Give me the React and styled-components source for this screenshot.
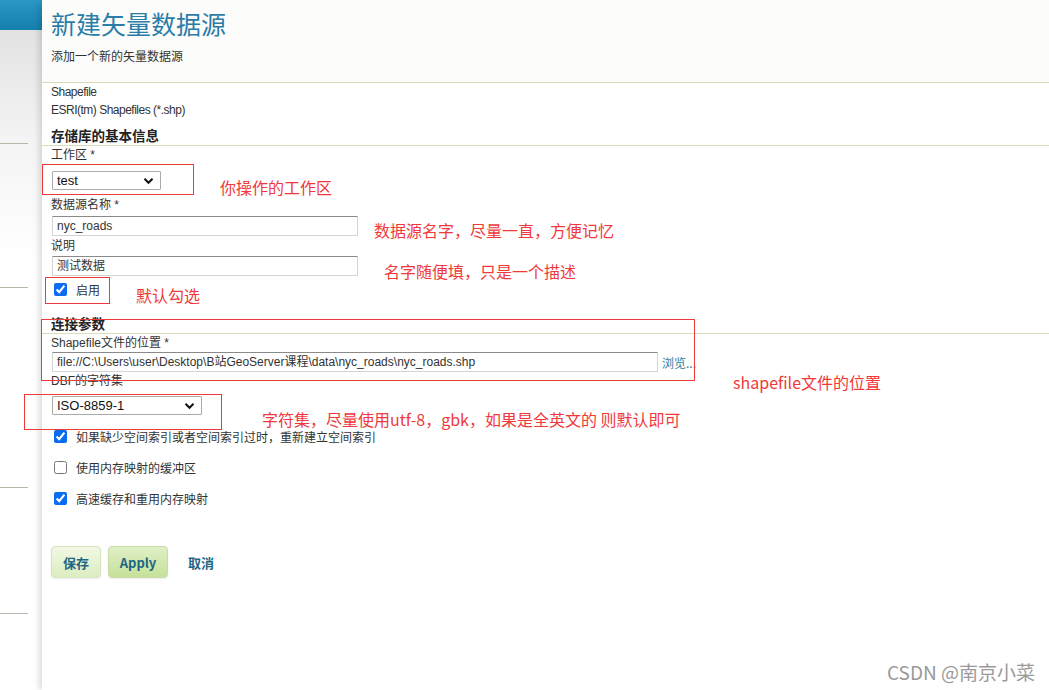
import styled, { createGlobalStyle } from "styled-components";

const Global = createGlobalStyle`
  html, body { margin: 0; padding: 0; background: #fff; }
  body {
    width: 1049px;
    height: 690px;
    overflow: hidden;
    font-family: "Liberation Sans", "Noto Sans CJK SC", sans-serif;
    color: #333;
  }
`;

const Page = styled.div`
  position: relative;
  display: flex;
  width: 1049px;
  height: 690px;
`;

const Sidebar = styled.div`
  width: 42px;
  flex-shrink: 0;
  background: linear-gradient(#e2e2e2 30px, #f4f4f4 140px, #fff 260px);
  display: flex;
  flex-direction: column;
`;

const SideTop = styled.div`
  height: 30px;
  background: linear-gradient(#2a97c6, #1580ae);
`;

const SideRule = styled.div`
  width: 28px;
  height: 1px;
  background: #b8b8aa;
  margin-top: ${(p) => p.$top}px;
`;

const Main = styled.div`
  flex: 1;
  position: relative;
  z-index: 1;
  background: #fff;
  border-top-left-radius: 7px;
  box-shadow: -3px 0 6px rgba(0, 0, 0, 0.14);
  padding-left: 9px;
`;

const Head = styled.div`
  background: #fcfdfa;
  margin-left: -9px;
  padding: 6px 0 0 9px;
  height: 76px;
  border-bottom: 1px solid #d9dbbb;
`;

const Title = styled.h1`
  margin: 0;
  font-family: "Noto Sans CJK SC", sans-serif;
  font-weight: 400;
  font-size: 25px;
  line-height: 34px;
  color: #2b7ca6;
`;

const Sub = styled.div`
  font-family: "Noto Sans CJK SC", sans-serif;
  font-size: 12px;
  line-height: 18px;
  margin-top: 7px;
  color: #333;
`;

const Info = styled.div`
  font-size: 12px;
  letter-spacing: -0.5px;
  line-height: 18px;
  color: #333;
`;

const Section = styled.h3`
  margin: ${(p) => p.$mt}px -9px 0 -9px;
  padding-left: 9px;
  font-family: "Noto Sans CJK SC", sans-serif;
  font-size: 13.5px;
  font-weight: 700;
  line-height: 19px;
  color: #222;
  border-bottom: 1px solid #d9dbbb;
`;

const Label = styled.div`
  font-family: "Liberation Sans", "Noto Sans CJK SC", sans-serif;
  font-size: 12px;
  line-height: 16px;
  margin-top: ${(p) => p.$mt || 0}px;
  color: #333;
`;

const Select = styled.div`
  display: flex;
  align-items: center;
  justify-content: space-between;
  box-sizing: border-box;
  width: ${(p) => p.$w}px;
  height: 19px;
  margin-top: ${(p) => p.$mt || 0}px;
  margin-left: ${(p) => p.$ml || 1}px;
  padding: 0 6px 0 4px;
  border: 1px solid #aaa;
  border-radius: 1px;
  font-size: 13px;
  color: #111;
`;

const Input = styled.div`
  box-sizing: border-box;
  width: ${(p) => p.$w}px;
  height: 20px;
  margin-top: ${(p) => p.$mt || 0}px;
  margin-left: 1px;
  padding: 0 4px;
  border: 1px solid #d4d4d4;
  border-top-color: #8a8a8a;
  font-family: "Liberation Sans", "Noto Sans CJK SC", sans-serif;
  font-size: 12px;
  line-height: 18px;
  color: #333;
  white-space: nowrap;
  overflow: hidden;
`;

const FileRow = styled.div`
  display: flex;
  align-items: center;
  gap: 4px;
  margin-top: 1px;
`;

const Browse = styled.span`
  font-family: "Noto Sans CJK SC", sans-serif;
  font-size: 12px;
  color: #2a7c9c;
`;

const Check = styled.label`
  display: flex;
  align-items: center;
  gap: 9px;
  height: 16px;
  margin-top: ${(p) => p.$mt}px;
  margin-left: 3px;
  font-family: "Noto Sans CJK SC", sans-serif;
  font-size: 12px;
  color: #333;

  input {
    margin: 0;
    width: 13px;
    height: 13px;
    accent-color: #0a6cf0;
  }
`;

const Buttons = styled.div`
  display: flex;
  align-items: center;
  margin-top: 40px;
`;

const Btn = styled.div`
  box-sizing: border-box;
  width: ${(p) => p.$w}px;
  height: 32px;
  margin-right: 7px;
  display: flex;
  align-items: center;
  justify-content: center;
  border: 1px solid ${(p) => (p.$strong ? "#c9dca8" : "#d6e4c0")};
  border-radius: 4px;
  background: ${(p) =>
    p.$strong
      ? "linear-gradient(#e0efc6, #c6e19a)"
      : "linear-gradient(#f1f8e4, #dcedc0)"};
  box-shadow: 0 1px 2px rgba(0, 0, 0, 0.08);
  font-family: "Noto Sans CJK SC", sans-serif;
  font-size: 13px;
  font-weight: 700;
  color: #1f6684;
`;

const Cancel = styled.span`
  margin-left: 13px;
  font-family: "Noto Sans CJK SC", sans-serif;
  font-size: 13px;
  font-weight: 700;
  color: #1f6684;
`;

const Mark = styled.div`
  position: absolute;
  z-index: 2;
  left: ${(p) => p.$x}px;
  top: ${(p) => p.$y}px;
  width: ${(p) => p.$w}px;
  height: ${(p) => p.$h}px;
  border: 1px solid #f0393b;
  box-sizing: border-box;
  pointer-events: none;
`;

const Note = styled.div`
  position: absolute;
  z-index: 2;
  left: ${(p) => p.$x}px;
  top: ${(p) => p.$y}px;
  font-family: "Noto Sans CJK SC", sans-serif;
  font-size: 16px;
  line-height: 20px;
  color: #f0393b;
  white-space: nowrap;
`;

const Watermark = styled.div`
  position: absolute;
  z-index: 2;
  right: 14px;
  bottom: 5px;
  font-family: "Noto Sans CJK SC", sans-serif;
  font-size: 19px;
  color: #9a9a9a;
`;

const Chevron = () => (
  <svg width="11" height="8" viewBox="0 0 11 8">
    <path d="M1.5 1.8 L5.5 5.8 L9.5 1.8" fill="none" stroke="#111" strokeWidth="2" />
  </svg>
);

export default function App() {
  return (
    <Page>
      <Global />
      <Sidebar>
        <SideTop />
        <SideRule $top={113} />
        <SideRule $top={143} />
        <SideRule $top={199} />
        <SideRule $top={125} />
      </Sidebar>

      <Main>
        <Head>
          <Title>新建矢量数据源</Title>
          <Sub>添加一个新的矢量数据源</Sub>
        </Head>
        <Info>
          Shapefile
          <br />
          ESRI(tm) Shapefiles (*.shp)
        </Info>

        <Section $mt={7}>存储库的基本信息</Section>
        <Label $mt={1}>工作区 *</Label>
        <Select $w={109} $mt={8}>
          <span>test</span>
          <Chevron />
        </Select>
        <Label $mt={7}>数据源名称 *</Label>
        <Input $w={306} $mt={3}>nyc_roads</Input>
        <Label $mt={2}>说明</Label>
        <Input $w={306} $mt={2}>测试数据</Input>
        <Check $mt={5}>
          <input type="checkbox" defaultChecked />
          启用
        </Check>

        <Section $mt={17}>连接参数</Section>
        <Label $mt={1}>Shapefile文件的位置 *</Label>
        <FileRow>
          <Input $w={606}>
            file://C:\Users\user\Desktop\B站GeoServer课程\data\nyc_roads\nyc_roads.shp
          </Input>
          <Browse>浏览...</Browse>
        </FileRow>
        <Label $mt={1}>DBF的字符集</Label>
        <Select $w={150} $mt={7} $ml={0}>
          <span>ISO-8859-1</span>
          <Chevron />
        </Select>
        <Check $mt={13}>
          <input type="checkbox" defaultChecked />
          如果缺少空间索引或者空间索引过时，重新建立空间索引
        </Check>
        <Check $mt={15}>
          <input type="checkbox" />
          使用内存映射的缓冲区
        </Check>
        <Check $mt={15}>
          <input type="checkbox" defaultChecked />
          高速缓存和重用内存映射
        </Check>

        <Buttons>
          <Btn $w={50}>保存</Btn>
          <Btn $w={60} $strong>
            Apply
          </Btn>
          <Cancel>取消</Cancel>
        </Buttons>
      </Main>

      <Mark $x={42} $y={164} $w={152} $h={31} />
      <Mark $x={45} $y={277} $w={65} $h={27} />
      <Mark $x={41} $y={319} $w={654} $h={62} />
      <Mark $x={24} $y={394} $w={198} $h={36} />

      <Note $x={220} $y={177}>你操作的工作区</Note>
      <Note $x={374} $y={220}>数据源名字，尽量一直，方便记忆</Note>
      <Note $x={384} $y={261}>名字随便填，只是一个描述</Note>
      <Note $x={136} $y={285}>默认勾选</Note>
      <Note $x={733} $y={372}>shapefile文件的位置</Note>
      <Note $x={262} $y={409}>字符集，尽量使用utf-8，gbk，如果是全英文的 则默认即可</Note>

      <Watermark>CSDN @南京小菜</Watermark>
    </Page>
  );
}
